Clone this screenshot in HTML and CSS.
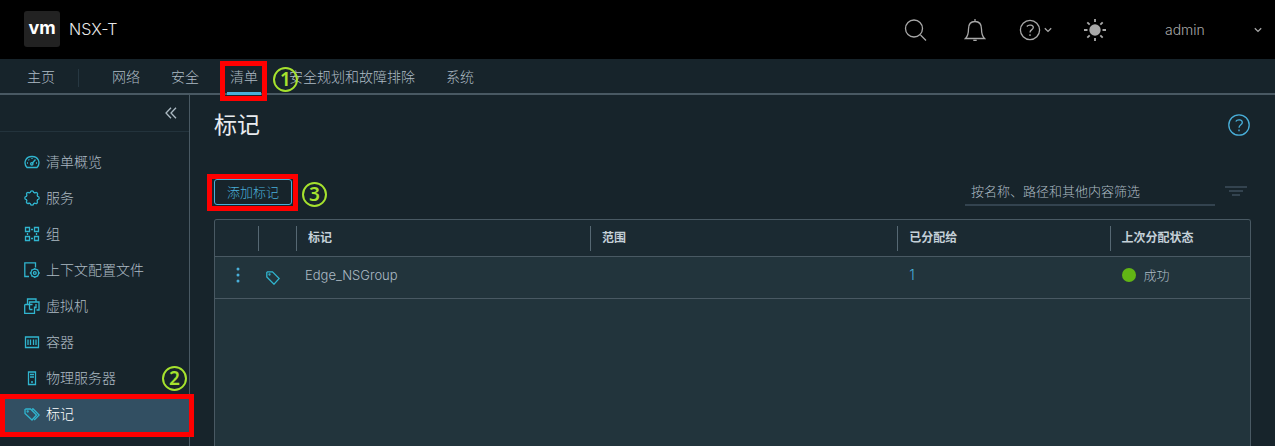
FILE: index.html
```html
<!DOCTYPE html>
<html lang="zh-CN">
<head>
<meta charset="utf-8">
<title>NSX-T</title>
<link rel="stylesheet" href="styles.css">
</head>
<body>
<header class="topbar">
  <a class="brand" href="#"><span class="logo">vm</span><span>NSX-T</span></a>
  <div class="actions">
    <button class="action" aria-label="搜索"><svg width="24" height="24" viewBox="0 0 24 24"><circle cx="11" cy="10.500" r="8.500"/><path d="M17.500 17l5.500 5.500"/></svg></button>
    <button class="action" aria-label="通知"><svg width="22" height="24" viewBox="0 0 22 24"><path d="M1.500 20.500C4 18 4.500 16 4.500 11C4.500 6 7 3.500 11 3.500S17.500 6 17.500 11C17.500 16 18 18 20.500 20.500ZM11 1v2.500M9.300 22.300h3.400"/></svg></button>
    <button class="action" aria-label="帮助"><svg width="22" height="22" viewBox="0 0 22 22"><circle cx="11" cy="11" r="9.600"/><path d="M7.800 7.500C9.500 5.400 14.300 5.700 14.300 8.500C14.300 10.800 11 10.500 11 13.500M11 15.200v1.800"/></svg><svg width="8" height="6" viewBox="0 0 8 6"><path d="M.8 1.200l3.200 3.200 3.200-3.200"/></svg></button>
    <button class="action" aria-label="主题"><svg width="24" height="24" viewBox="0 0 24 24"><circle class="solid" cx="12" cy="12" r="5.700"/><path class="rays" d="M12 1v3M12 20v3M1 12h3.500M19.500 12H23M4.300 4.300l2.400 2.400M17.300 17.300l2.400 2.400M4.300 19.700l2.400-2.400M17.300 6.700l2.400-2.400"/></svg></button>
    <button class="user"><span>admin</span><svg width="8" height="6" viewBox="0 0 8 6"><path d="M.8 1.200l3.200 3.200 3.200-3.200"/></svg></button>
  </div>
</header>
<nav class="mainnav">
  <a class="home" href="#">主页</a>
  <a href="#">网络</a>
  <a href="#">安全</a>
  <a class="current" href="#">清单<span class="frame frame-nav"></span><span class="step step-nav">1</span></a>
  <a href="#">安全规划和故障排除</a>
  <a href="#">系统</a>
</nav>
<div class="body">
  <aside class="sidebar">
    <div class="collapse"><button aria-label="折叠"><svg width="12" height="12" viewBox="0 0 12 12"><path d="M6 .8L1 6l5 5.200M11 .8L6 6l5 5.200"/></svg></button></div>
    <ul class="menu">
      <li><a href="#"><svg viewBox="0 0 16 16"><path d="M3 13.500C-1 9 1.500 2.500 8 2.500S17 9 13 13.500ZM8 9.500l3.500-4M3 9h1M4.500 5.500l.7.700M8 4v1M12 9h1"/><circle cx="7.800" cy="9.800" r="1.200"/></svg>清单概览</a></li>
      <li><a href="#"><svg viewBox="0 0 16 16"><path d="M6.300 2.400Q6.500.8 8 .8T9.700 2.400L10.900 2.900Q12.200 2 13.200 2.900T13.200 5.100L13.600 6.300Q15.200 6.500 15.200 8T13.600 9.700L13.100 10.900Q14 12.200 13 13.200T10.900 13.100L9.700 13.600Q9.500 15.200 8 15.200T6.300 13.600L5.100 13.100Q3.800 14 2.800 13T2.900 10.900L2.400 9.700Q.8 9.500.8 8T2.400 6.300L2.900 5.100Q2 3.800 3 2.800T5.100 2.900Z"/></svg>服务</a></li>
      <li><a href="#"><svg viewBox="0 0 16 16"><path d="M1.500 1.500h4v4h-4zM10.500 1.500h4v4h-4zM1.500 10.500h4v4h-4zM10.500 10.500h4v4h-4zM7 3.500h2M7 12.500h2M3.500 7v2M12.500 7v2"/></svg>组</a></li>
      <li><a href="#"><svg viewBox="0 0 16 16"><path d="M5 14.500H.8V.8H11.500V5.500"/><circle cx="10.800" cy="11" r="3.800"/><circle cx="10.800" cy="11" r="1.400"/><path d="M10.800 6v1.200M10.800 14.800V16M5.800 11H7M14.600 11h1.200M7.400 7.600l.8.800M13.400 13.600l.8.800M14.200 7.600l-.8.800M7.400 14.400l.8-.8"/></svg>上下文配置文件</a></li>
      <li><a href="#"><svg viewBox="0 0 16 16"><path d="M3.500 4.500V1H12v2.500M5.500 11.500V4H15v8H12.500M8.500 6.500H1.500q-.8 0-.8.800V15.300H10.500V8.500M3.500 4.500v2M5.500 11.500h3M12 6v3.500h-1.500"/></svg>虚拟机</a></li>
      <li><a href="#"><svg viewBox="0 0 16 16"><path d="M1.500 3h13v10.500h-13zM4 5.500v5.500M6.500 5.500v5.500M9.500 5.500v5.500M12 5.500v5.500"/></svg>容器</a></li>
      <li><a href="#"><svg viewBox="0 0 16 16"><path d="M4.500 2h7v12.500h-7zM6 4.500h4M6 7h4M7 12h2"/></svg>物理服务器<span class="step step-menu">2</span></a></li>
      <li><a class="selected" href="#"><svg viewBox="0 0 16 16"><path d="M1 3.500L2 3h4.500l6 6-4.500 5L1 7.500ZM8 3h1.200l6 6-5 5"/><circle cx="3.700" cy="5.500" r=".5"/></svg>标记<span class="frame frame-menu"></span></a></li>
    </ul>
  </aside>
  <main class="content">
    <div class="heading"><h1>标记</h1><button aria-label="帮助"><svg width="24" height="24" viewBox="0 0 24 24"><circle cx="12" cy="12" r="10.200"/><path d="M8.800 8.500C10 6.300 15.300 6.300 15.300 9.500C15.300 12 12 11.500 12 14.800M12 16.500v1.700"/></svg></button></div>
    <div class="toolbar">
      <div class="add"><button class="addbtn">添加标记</button><span class="frame frame-add"></span><span class="step step-add">3</span></div>
      <input class="filter" type="text" aria-label="筛选" placeholder="按名称、路径和其他内容筛选">
      <button class="filterbtn" aria-label="筛选选项"><svg width="22" height="12" viewBox="0 0 22 12"><path d="M0 1h22M4 5h14M7 9h8"/></svg></button>
    </div>
    <div class="grid">
      <table>
        <colgroup><col class="c-menu"><col class="c-icon"><col class="c-tag"><col class="c-scope"><col class="c-assigned"><col></colgroup>
        <thead><tr><th></th><th></th><th>标记</th><th>范围</th><th>已分配给</th><th>上次分配状态</th></tr></thead>
        <tbody><tr>
          <td class="center"><button aria-label="操作"><svg width="4" height="16" viewBox="0 0 4 16"><circle class="dot" cx="2" cy="2" r="1.500"/><circle class="dot" cx="2" cy="8" r="1.500"/><circle class="dot" cx="2" cy="14" r="1.500"/></svg></button></td>
          <td><svg class="tag" width="14" height="14" viewBox="0 0 14 14"><path d="M.8 1.500L1.500.8H6.500L13.200 7.500 8 13.200.8 6Z"/><circle cx="3.500" cy="3.500" r=".5"/></svg></td>
          <td class="name">Edge_NSGroup</td>
          <td></td>
          <td><a href="#">1</a></td>
          <td><span class="status">成功</span></td>
        </tr></tbody>
      </table>
    </div>
  </main>
</div>
</body>
</html>
```
FILE: styles.css
```css
* { box-sizing: border-box; }
body {
  margin: 0;
  min-height: 100vh;
  display: flex;
  flex-direction: column;
  background: #17242b;
  color: #adbbc4;
  font: 300 14px/20px Inter, "Noto Sans CJK SC", sans-serif;
}
a { color: inherit; text-decoration: none; }
button { display: inline-flex; align-items: center; justify-content: center; padding: 0; border: 0; background: none; color: inherit; font: inherit; }
svg { flex: none; fill: none; stroke: currentColor; stroke-width: 1.300; }
.solid, .dot { fill: currentColor; stroke: none; }
.rays { stroke-width: 1.800; }

.topbar { display: flex; justify-content: space-between; height: 59px; background: #000; color: #a8a8a8; }
.brand { display: flex; align-items: center; gap: 9px; padding: 0 0 2px 24px; color: #e8e8e8; font-size: 16px; }
.logo { width: 36px; height: 36px; border-radius: 3px; background: #222; color: #fff; font: 700 18px/34px Inter, sans-serif; text-align: center; }
.actions { display: flex; }
.action { width: 60px; gap: 3px; }
.user { width: 150px; justify-content: space-between; padding: 0 13px 0 40px; }

.mainnav { display: flex; gap: 25px; height: 36px; padding-left: 24px; border-bottom: 2px solid #495963; }
.mainnav a { position: relative; padding: 0 3px; line-height: 36px; }
.mainnav .home { margin-right: 5px; padding-right: 24px; }
.home::after { content: ""; position: absolute; right: 0; top: 10px; width: 1px; height: 18px; background: #273842; }
.mainnav .current { z-index: 1; border-bottom: 3px solid #49afd9; height: 36px; }

.frame { position: absolute; border: 5px solid #f00; pointer-events: none; }
.frame-nav { inset: 2px -6px -9px -7px; }
.frame-menu { inset: -2px -5px -5px 0; }
.frame-add { inset: -5px -6px -6px -7px; }
.step { position: absolute; width: 25px; height: 25px; border: 2px solid #a6e22e; border-radius: 50%; color: #a6e22e; font: 600 19px/21px "Noto Sans", sans-serif; text-align: center; }
.step-nav { left: 46px; top: 8px; }
.step-menu { right: 2px; top: 6px; }
.step-add { left: 88px; top: 3px; }

.body { flex: 1; display: flex; }
.sidebar { width: 190px; flex: none; border-right: 1px solid #495963; }
.collapse { display: flex; justify-content: flex-end; height: 37px; padding-right: 12px; border-bottom: 1px solid #23333c; }
.menu { list-style: none; margin: 0; padding: 12px 0 0; }
.menu a { position: relative; display: flex; align-items: center; gap: 6px; height: 36px; padding-left: 24px; }
.menu svg { width: 16px; height: 16px; color: #30b5cf; }
.menu .selected { z-index: 1; background: #324f62; color: #fff; }

.content { flex: 1; min-width: 0; display: flex; flex-direction: column; padding: 12px 24px 0; }
.heading { display: flex; justify-content: space-between; align-items: center; height: 36px; color: #49afd9; }
h1 { margin: 0; color: #e9ecef; font-size: 23px; line-height: 36px; font-weight: 400; }
.toolbar { display: flex; align-items: center; height: 26px; margin: 36px 4px 14px 0; }
.add { position: relative; margin-right: auto; }
.addbtn { display: flex; width: 78px; height: 26px; border: 1px solid #49afd9; border-radius: 3px; color: #49afd9; font-size: 13px; }
.filter { width: 250px; height: 28px; padding: 0 6px; border: 0; border-bottom: 2px solid #33434f; background: none; color: #adbbc4; font: inherit; font-size: 13px; }
.filter::placeholder { color: #adbbc4; opacity: 1; }
.filterbtn { margin-left: 10px; color: #33434f; }
.filterbtn svg { stroke-width: 2; }

.grid { flex: 1; border: 1px solid #495963; border-bottom: 0; border-radius: 3px 3px 0 0; background: #22343c; overflow: hidden; }
table { width: 100%; table-layout: fixed; border-collapse: separate; border-spacing: 0; }
.c-menu { width: 43px; }
.c-icon { width: 38px; }
.c-tag { width: 28.400%; }
.c-scope { width: 29.700%; }
.c-assigned { width: 20.500%; }
th { position: relative; height: 37px; padding: 0 12px; border-bottom: 1px solid #495963; background: #1b2a32; color: #c4d0d8; font-size: 12px; font-weight: 700; text-align: left; }
th + th::before { content: ""; position: absolute; left: 0; top: 6px; width: 1px; height: 25px; background: #566873; }
td { height: 42px; padding: 0 12px 6px; border-bottom: 1px solid #495963; }
td:nth-child(-n+2) { padding: 0; }
td:nth-child(2) { padding-left: 8px; }
td a, td button { color: #49afd9; }
td.name { padding-left: 9px; font-size: 13px; }
td.center { text-align: center; padding-left: 2px; }
td svg { display: block; }
.tag { color: #30b5cf; }
.status { display: flex; align-items: center; gap: 8px; font-size: 13px; }
.status::before { content: ""; width: 14px; height: 14px; border-radius: 50%; background: #62b515; }
```
